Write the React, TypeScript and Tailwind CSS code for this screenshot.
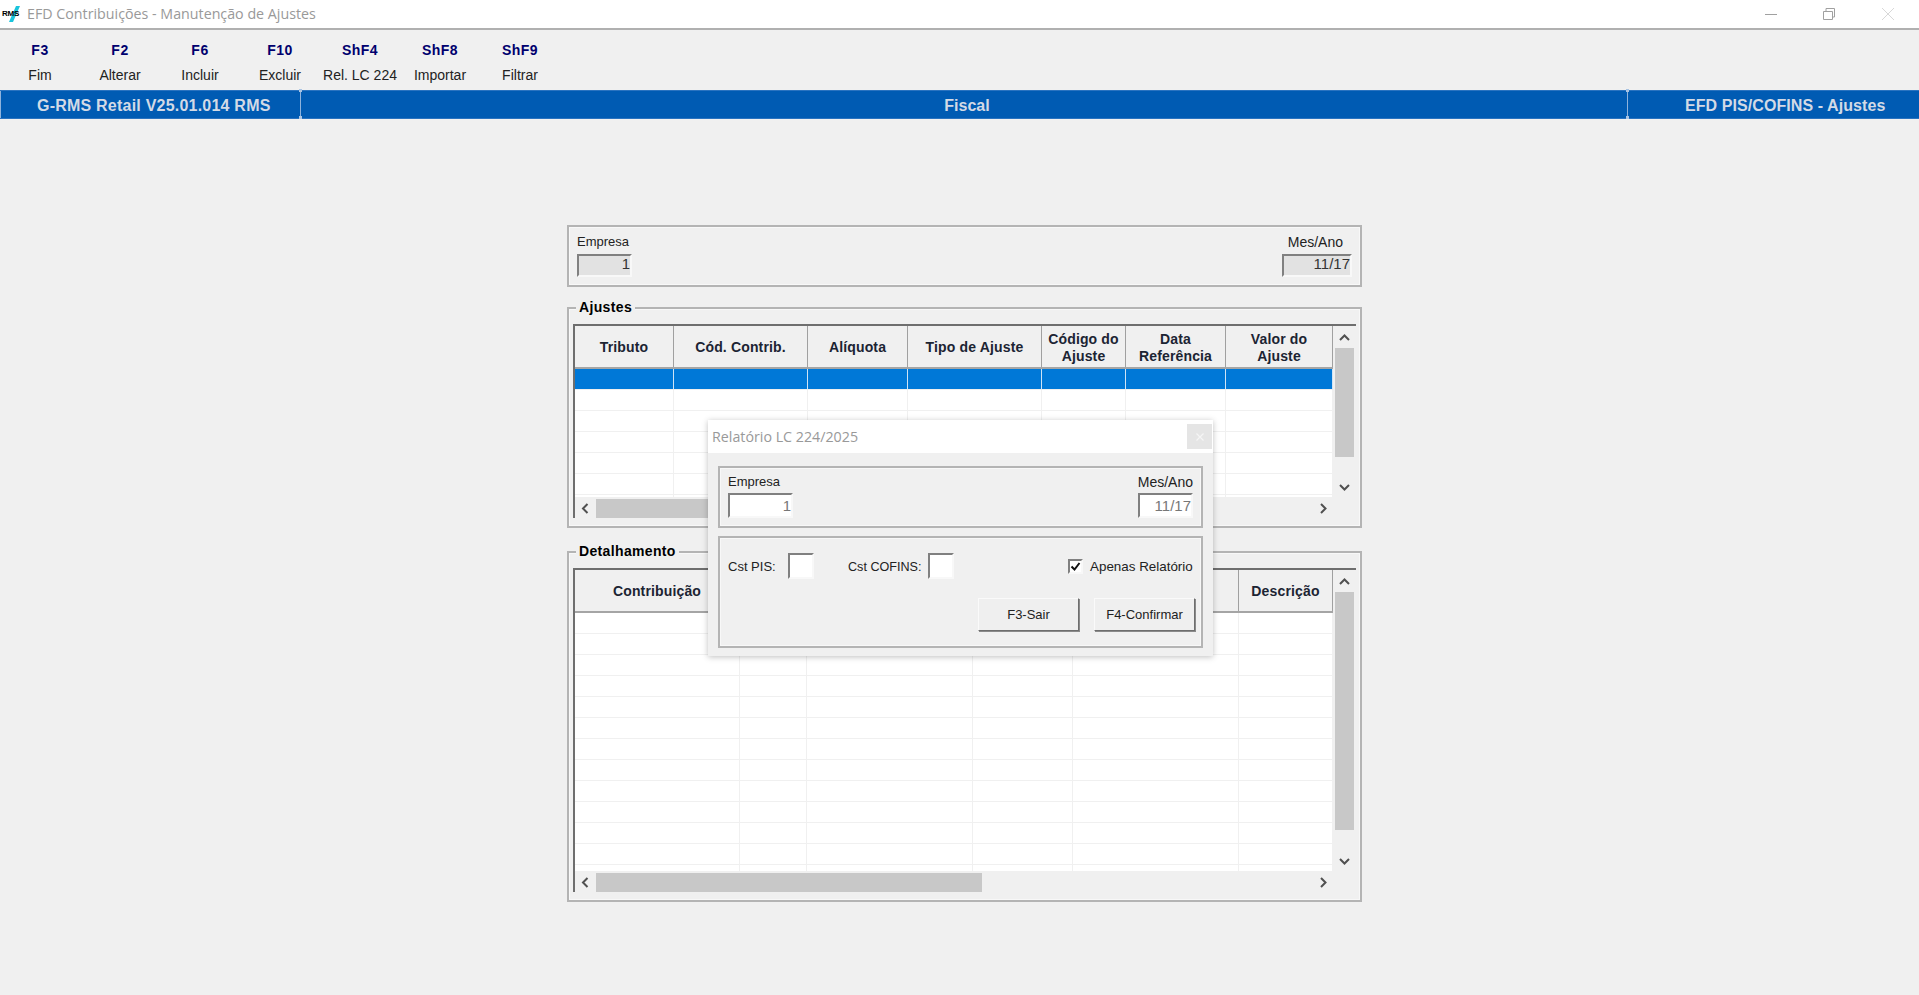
import type { ReactNode } from 'react';

const sans = 'font-["Liberation_Sans",Arial,sans-serif]';
const tools = [
  ['F3', 'Fim'],
  ['F2', 'Alterar'],
  ['F6', 'Incluir'],
  ['F10', 'Excluir'],
  ['ShF4', 'Rel. LC 224'],
  ['ShF8', 'Importar'],
  ['ShF9', 'Filtrar'],
];

function Chevron({ dir }: { dir: 'up' | 'down' | 'left' | 'right' }) {
  const points = {
    up: '1,7 5.5,2.5 10,7',
    down: '1,3 5.5,7.5 10,3',
    left: '7.5,1 3,5.5 7.5,10',
    right: '3,1 7.5,5.5 3,10',
  }[dir];
  return (
    <svg width="11" height="11" viewBox="0 0 11 11" className="shrink-0">
      <polyline points={points} fill="none" stroke="#505050" strokeWidth="2" />
    </svg>
  );
}

function Panel({ legend, className, children }: { legend?: string; className: string; children?: ReactNode }) {
  return (
    <div className={`relative border-2 border-[#b4b4b4] shadow-[inset_0_0_0_1px_#f8f8f8] ${className}`}>
      {legend && (
        <span className="absolute left-[7px] top-[-10px] bg-[#f0f0f0] px-[3px] text-[14px] leading-[16px] font-bold tracking-[0.35px] text-black">
          {legend}
        </span>
      )}
      {children}
    </div>
  );
}

function Field({ label, value, className, disabled }: { label: string; value: string; className: string; disabled?: boolean }) {
  return (
    <div className={`flex justify-end border-2 border-t-[#808080] border-l-[#808080] border-r-[#f8f8f8] border-b-[#f8f8f8] text-[15px] ${className}`} aria-label={label}>
      <span className={disabled ? 'text-[#777777]' : 'text-[#333333]'}>{value}</span>
    </div>
  );
}

function Button({ children, className }: { children: string; className: string }) {
  return (
    <button className={`flex h-[33px] items-center justify-center border border-t-[#fafafa] border-l-[#fafafa] border-r-[#6e6e6e] border-b-[#6e6e6e] bg-[#efefef] text-[13px] text-[#222222] shadow-[1px_1px_0_#8a8a8a] ${className}`}>
      {children}
    </button>
  );
}

function Handle() {
  return (
    <>
      <span className="absolute left-[-2px] top-[-2px] h-[3px] w-[3px] bg-[#a9c4e4]" />
      <span className="absolute bottom-[-1px] left-[-2px] h-[3px] w-[3px] bg-[#a9c4e4]" />
    </>
  );
}

function Grid({
  cols,
  headers,
  rowCount,
  bodyH,
  selected,
  thumbH,
  hThumbW,
}: {
  cols: string;
  headers: string[];
  rowCount: number;
  bodyH: string;
  selected?: boolean;
  thumbH: string;
  hThumbW: string;
}) {
  return (
    <div className="mx-[4px] mt-[15px] border-t-[2px] border-l-[2px] border-t-[#6e6e6e] border-l-[#6e6e6e]">
      <div className="flex">
        <div className="w-[758px]">
          <div className={`grid h-[43px] border-b-[2px] border-[#a5a5a5] ${cols}`}>
            {headers.map((h, i) => (
              <div key={i} className="flex items-center justify-center border-r border-[#a0a0a0] bg-[#f0f0f0] pt-[2px] text-center text-[14px] leading-[17px] font-bold tracking-[0.15px] whitespace-pre-line text-[#1c2433]">
                {h}
              </div>
            ))}
          </div>
          <div className={`overflow-hidden bg-white ${bodyH}`}>
            {Array.from({ length: rowCount }).map((_, r) => (
              <div key={r} className={`grid h-[21px] ${cols}`}>
                {headers.map((_, c) => (
                  <div
                    key={c}
                    className={selected && r === 0 ? 'border-r border-b border-r-[#cfe3f5] border-b-[#f0f0f0] bg-[#0078d7]' : 'border-r border-b border-[#f0f0f0]'}
                  />
                ))}
              </div>
            ))}
          </div>
        </div>
        <div className="flex w-[21px] flex-col items-center pl-[2px]">
          <div className="flex h-[22px] shrink-0 items-center pt-[2px]"><Chevron dir="up" /></div>
          <div className="min-h-0 flex-1 self-stretch">
            <div className={`w-[19px] bg-[#c8c8c8] ${thumbH}`} />
          </div>
          <div className="flex h-[22px] shrink-0 items-center pt-[2px]"><Chevron dir="down" /></div>
        </div>
      </div>
      <div className="mt-[2px] flex h-[19px] w-[758px] items-center">
        <div className="flex w-[21px] justify-center"><Chevron dir="left" /></div>
        <div className="h-full flex-1">
          <div className={`h-full bg-[#c8c8c8] ${hThumbW}`} />
        </div>
        <div className="flex w-[21px] justify-center pl-[2px]"><Chevron dir="right" /></div>
      </div>
    </div>
  );
}

export default function App() {
  return (
    <div className={`relative flex h-[995px] w-[1919px] flex-col overflow-hidden bg-[#f0f0f0] text-[#222222] ${sans}`}>
      {/* title bar */}
      <div className="flex h-[30px] items-center border-b-2 border-[#b0b0b0] bg-white">
        <div className="relative ml-[2px] h-[20px] w-[21px]">
          <svg width="21" height="20" viewBox="0 0 21 20" className="absolute left-0 top-0">
            <path d="M7 18 L14 2 L18 2 L11 18 Z" fill="#19c4dc" />
          </svg>
          <span className="absolute left-0 top-[5px] text-[8px] leading-[10px] font-bold tracking-[-0.2px] text-black">RMS</span>
        </div>
        <span className='ml-[4px] font-["Open_Sans",sans-serif] text-[14.25px] text-[#999999]'>EFD Contribuições - Manutenção de Ajustes</span>
        <div className="ml-auto flex items-center">
          <div className="mr-[46px] h-px w-[12px] bg-[#a0a0a0]" />
          <svg width="12" height="12" viewBox="0 0 12 12" className="mr-[47px]">
            <path d="M0.5 3.5H9.5V11.5H0.5Z M3 3V0.5H11.5V9H9.5" fill="none" stroke="#a0a0a0" />
          </svg>
          <svg width="12" height="12" viewBox="0 0 12 12" className="mr-[25px]">
            <path d="M0 0L12 12M12 0L0 12" fill="none" stroke="#d8d8d8" />
          </svg>
        </div>
      </div>

      {/* function keys */}
      <div className="flex h-[60px] pt-[10px]">
        {tools.map(([key, label]) => (
          <div key={key} className="flex w-[80px] flex-col items-center">
            <span className="text-[14px] leading-[20px] font-bold tracking-[0.5px] text-[#00006e]">{key}</span>
            <span className="mt-[5px] text-[14px] leading-[20px] whitespace-nowrap text-[#222222]">{label}</span>
          </div>
        ))}
      </div>

      {/* status bar */}
      <div className="flex h-[29px] items-center border-y border-[#2a73c0] bg-[#005bb3] text-[16px] font-bold text-[#d3dae6]">
        <div className="relative flex h-full w-[301px] items-center border-x border-[#8fb3dc] pt-[2px] pl-[36px] tracking-[0.22px]">
          G-RMS Retail V25.01.014 RMS
          <span className="absolute right-[-2px] top-[-2px] h-[3px] w-[3px] bg-[#a9c4e4]" />
          <span className="absolute right-[-2px] bottom-[-1px] h-[3px] w-[3px] bg-[#a9c4e4]" />
        </div>
        <div className="flex h-full flex-1 items-center justify-center pt-[2px] pl-[6px]">Fiscal</div>
        <div className="relative flex h-full w-[292px] items-center border-l border-[#8fb3dc] pt-[2px] pl-[57px] tracking-[0.08px]">
          EFD PIS/COFINS - Ajustes
          <Handle />
        </div>
      </div>

      {/* content */}
      <div className="ml-[567px] flex w-[795px] flex-col pt-[106px]">
        <Panel className="flex h-[62px] justify-between px-[8px] pt-[5px]">
          <div className="flex flex-col">
            <span className="text-[13px] leading-[20px]">Empresa</span>
            <Field label="Empresa" value="1" className="mt-[2px] h-[23px] w-[55px] items-start bg-[#e2e2e2] leading-[15px]" />
          </div>
          <div className="flex flex-col items-end">
            <span className="mr-[9px] text-[14px] leading-[20px]">Mes/Ano</span>
            <Field label="Mes/Ano" value="11/17" className="mt-[2px] h-[23px] w-[70px] items-start bg-[#e2e2e2] leading-[15px]" />
          </div>
        </Panel>

        <Panel legend="Ajustes" className="mt-[20px] h-[221px]">
          <Grid
            cols="grid-cols-[99px_134px_100px_134px_84px_100px_107px]"
            headers={['Tributo', 'Cód. Contrib.', 'Alíquota', 'Tipo de Ajuste', 'Código do\nAjuste', 'Data\nReferência', 'Valor do\nAjuste']}
            rowCount={7}
            bodyH="h-[128px]"
            selected
            thumbH="h-[109px]"
            hThumbW="w-[600px]"
          />
        </Panel>

        <Panel legend="Detalhamento" className="mt-[23px] h-[351px]">
          <Grid
            cols="grid-cols-[165px_67px_166px_100px_166px_94px]"
            headers={['Contribuição', '', '', '', '', 'Descrição']}
            rowCount={13}
            bodyH="h-[258px]"
            thumbH="h-[238px]"
            hThumbW="w-[386px]"
          />
        </Panel>
      </div>

      {/* modal dialog */}
      <div className="absolute left-[708px] top-[420px] flex h-[236px] w-[505px] flex-col bg-[#f0f0f0] shadow-[0_1px_6px_rgba(0,0,0,0.25)]">
        <div className="flex h-[33px] items-center justify-between bg-white pl-[4px] pr-[1px]">
          <span className='font-["Open_Sans",sans-serif] text-[14.25px] text-[#999999]'>Relatório LC 224/2025</span>
          <div className="flex h-[25px] w-[25px] items-center justify-center bg-[#e5e5e5]">
            <svg width="8" height="8" viewBox="0 0 8 8">
              <path d="M0.5 0.5L7.5 7.5M7.5 0.5L0.5 7.5" fill="none" stroke="#f5f5f5" strokeWidth="1.2" />
            </svg>
          </div>
        </div>
        <div className="flex flex-col px-[10px] pt-[13px]">
          <Panel className="flex h-[62px] justify-between px-[8px] pt-[4px]">
            <div className="flex flex-col">
              <span className="text-[13px] leading-[20px]">Empresa</span>
              <Field label="Empresa" value="1" disabled className="mt-[1px] h-[25px] w-[65px] items-center bg-white leading-[17px]" />
            </div>
            <div className="flex flex-col items-end">
              <span className="text-[14px] leading-[20px]">Mes/Ano</span>
              <Field label="Mes/Ano" value="11/17" disabled className="mt-[1px] h-[25px] w-[55px] items-center bg-white leading-[17px]" />
            </div>
          </Panel>
          <Panel className="mt-[8px] h-[112px]">
            <div className="mt-[15px] flex h-[26px] items-center pl-[8px] whitespace-nowrap">
              <span className="w-[60px] pt-[2px] text-[13px]">Cst PIS:</span>
              <div className="h-[26px] w-[26px] border-2 border-t-[#808080] border-l-[#808080] border-r-[#f8f8f8] border-b-[#f8f8f8] bg-white" />
              <span className="ml-[34px] w-[80px] pt-[2px] text-[12.6px]">Cst COFINS:</span>
              <div className="h-[26px] w-[26px] border-2 border-t-[#808080] border-l-[#808080] border-r-[#f8f8f8] border-b-[#f8f8f8] bg-white" />
              <div className="ml-[114px] flex h-[15px] w-[15px] items-center justify-center border-2 border-t-[#808080] border-l-[#808080] border-r-[#f8f8f8] border-b-[#f8f8f8] bg-white">
                <svg width="11" height="11" viewBox="0 0 11 11">
                  <path d="M1.5 5.5L4.5 8.5L9.5 2" fill="none" stroke="#111111" strokeWidth="2" />
                </svg>
              </div>
              <span className="ml-[7px] pt-[2px] text-[13.4px]">Apenas Relatório</span>
            </div>
            <div className="mt-[19px] flex justify-end gap-[15px] pr-[6px]">
              <Button className="w-[101px]">F3-Sair</Button>
              <Button className="w-[101px]">F4-Confirmar</Button>
            </div>
          </Panel>
        </div>
      </div>
    </div>
  );
}
